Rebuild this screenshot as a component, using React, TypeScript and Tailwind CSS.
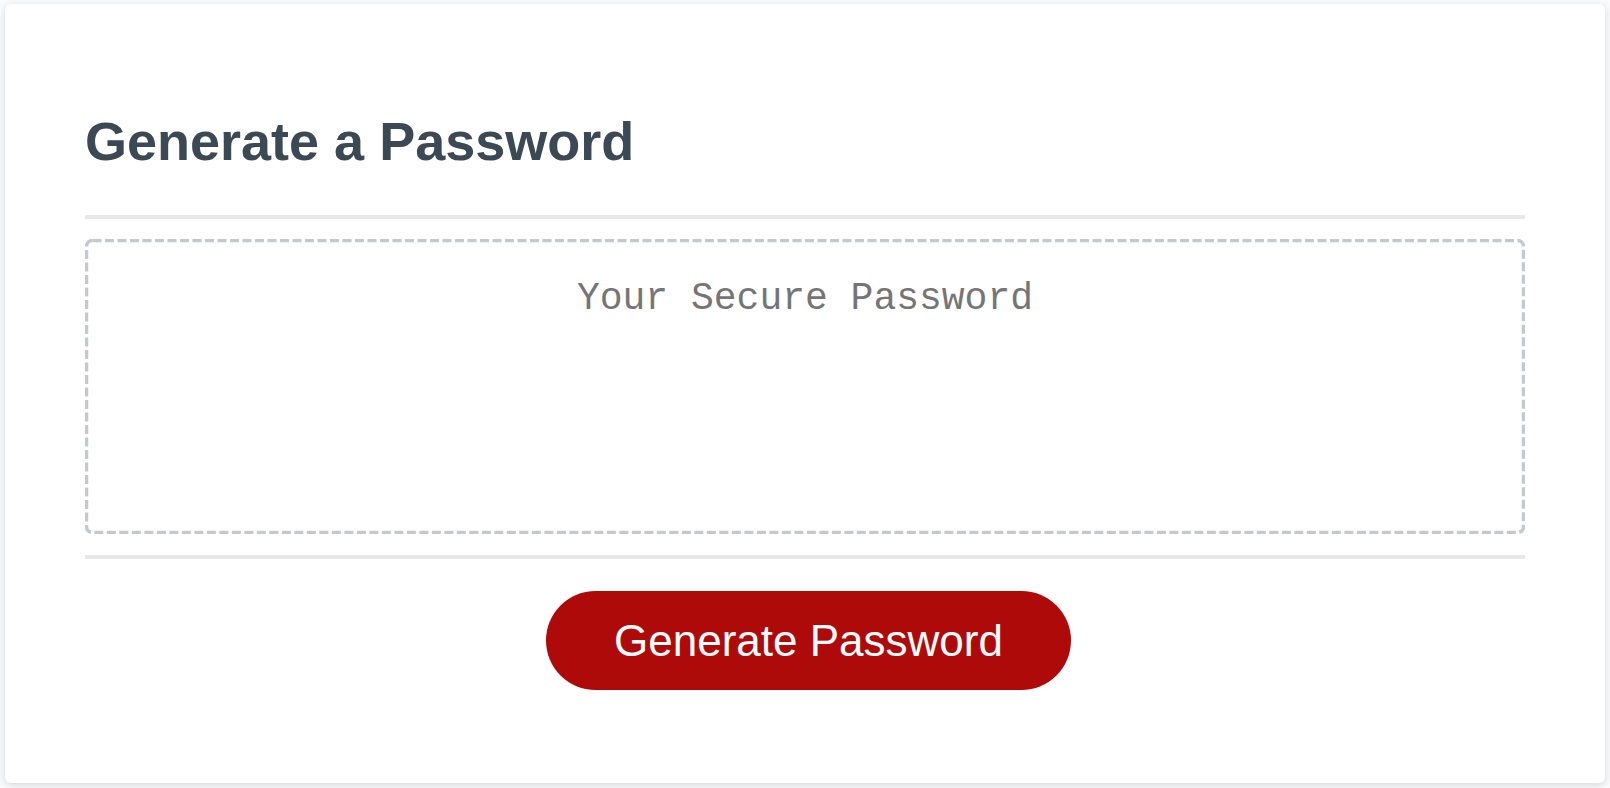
export default function App() {
  return (
    <div className="min-h-screen bg-[#f9fbfd] px-[5px] pt-[4px] pb-[5px]">
      <div className="h-[779px] rounded-[6px] bg-white px-[80px] pt-[106px] shadow-[0_2px_8px_0_rgba(0,0,0,0.15)]">
        <h1 className="font-['Liberation_Sans',Arial,sans-serif] text-[54px] leading-[62px] font-bold text-[#3b4954]">
          Generate a Password
        </h1>
        <div className="mt-[43px] h-[4px] bg-[#e8e8e8]" />
        <div className="relative mt-[20px] h-[295px]">
          <textarea
            readOnly
            placeholder="Your Secure Password"
            aria-label="Generated Password"
            className="block h-full w-full resize-none rounded-[6px] border-[3px] border-transparent px-4 pt-[35px] text-center font-['Liberation_Mono','Courier_New',monospace] text-[38px] leading-[44px] text-[#3b4954] outline-none placeholder:text-[#757575]"
          />
          {/* dashed outline, drawn so dash/gap ratio matches */}
          <svg
            className="pointer-events-none absolute inset-0"
            width="1440"
            height="295"
            aria-hidden="true"
          >
            <rect
              x="1.5"
              y="1.5"
              width="1437"
              height="292"
              rx="6"
              fill="none"
              stroke="#c3c9cf"
              strokeWidth="3.5"
              strokeDasharray="9 3.5"
            />
          </svg>
        </div>
        <div className="mt-[21px] h-[4px] bg-[#e8e8e8]" />
        <div className="flex justify-center pl-[7px]">
          <button
            type="button"
            className="mt-[32px] h-[99px] w-[525px] rounded-full bg-[#ae0a0a] font-['Liberation_Sans',Arial,sans-serif] text-[44px] leading-none text-white"
          >
            Generate Password
          </button>
        </div>
      </div>
    </div>
  );
}
